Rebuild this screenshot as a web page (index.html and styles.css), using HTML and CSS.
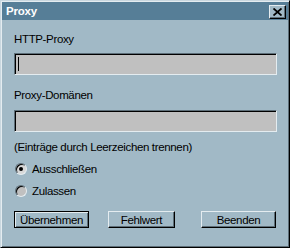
FILE: index.html
```html
<!DOCTYPE html>
<html lang="de">
<head>
  <meta charset="UTF-8">
  <title>Proxy</title>
  <link rel="stylesheet" href="styles.css">
</head>
<body>

  <div class="window">
    <div class="titlebar">
      <span class="title">Proxy</span>
      <button class="close" type="button">
        <svg width="9" height="8" viewBox="0 0 9 8">
          <path d="M0.5 0.5 L8.5 7.5 M8.5 0.5 L0.5 7.5" stroke="#000" stroke-width="1.8" />
        </svg>
      </button>
    </div>

    <div class="content">
      <div class="label first">HTTP-Proxy</div>
      <div class="field"><span class="caret"></span></div>

      <div class="label second">Proxy-Domänen</div>
      <div class="field"></div>

      <div class="label hint">(Einträge durch Leerzeichen trennen)</div>

      <div class="radio-row first-radio">
        <span class="radio checked"></span>
        <span>Ausschließen</span>
      </div>
      <div class="radio-row">
        <span class="radio"></span>
        <span>Zulassen</span>
      </div>

      <div class="buttons">
        <button type="button" class="btn default">Übernehmen</button>
        <button type="button" class="btn narrow">Fehlwert</button>
        <button type="button" class="btn last">Beenden</button>
      </div>
    </div>
  </div>

</body>
</html>
```

FILE: styles.css
```css
body {
  margin: 0;
  font-family: "Liberation Sans", Arial, sans-serif;
  font-size: 11.5px;
  letter-spacing: -0.35px;
  color: #000;
}

.window {
  width: 290px;
  height: 248px;
  box-sizing: border-box;
  padding: 1px;
  background-color: #a1b9c6;
  border: 1px solid;
  border-color: #c9d7df #000 #000 #c9d7df;
  box-shadow: inset 1px 1px #e4ecf0, inset -1px -1px #5d6e78;
}

.titlebar {
  height: 18px;
  display: flex;
  align-items: center;
  justify-content: space-between;
  padding: 0 2px 0 4px;
  background-color: #567e97;
}

.title {
  color: #fff;
  font-weight: bold;
  font-size: 11.5px;
  letter-spacing: -0.2px;
}

.close {
  width: 17px;
  height: 14px;
  padding: 0;
  margin-top: 1px;
  display: flex;
  align-items: center;
  justify-content: center;
  background-color: #a1b9c6;
  border: 1px solid;
  border-color: #e4ecf0 #000 #000 #e4ecf0;
  box-shadow: inset -1px -1px #5d6e78;
}

.content {
  padding: 0 11px 0 12px;
}

.label {
  line-height: 14px;
  height: 14px;
}

.label.first {
  margin-top: 12px;
  margin-bottom: 7px;
}

.label.second {
  margin-top: 13px;
  margin-bottom: 8px;
}

.label.hint {
  margin-top: 8px;
}

.field {
  height: 22px;
  box-sizing: border-box;
  background-color: #c0c0c0;
  border: 1px solid;
  border-color: #5d6e78 #e4ecf0 #e4ecf0 #5d6e78;
  box-shadow: inset 1px 1px #000;
  padding: 3px 0 0 3px;
}

.caret {
  display: block;
  width: 1px;
  height: 14px;
  background-color: #000;
}

.radio-row {
  display: flex;
  align-items: center;
  gap: 5px;
  height: 14px;
  line-height: 14px;
  margin-top: 8px;
  padding-left: 1px;
}

.radio {
  width: 12px;
  height: 12px;
  box-sizing: border-box;
  border-radius: 50%;
  border: 1px solid;
  border-color: #5d6e78 #e4ecf0 #e4ecf0 #5d6e78;
  box-shadow: inset 1px 1px #000;
  background-color: #c0c0c0;
  position: relative;
}

.radio.checked {
  background-color: #d8d8d8;
}

.radio.checked::after {
  content: "";
  position: absolute;
  left: 3px;
  top: 3px;
  width: 4px;
  height: 4px;
  border-radius: 50%;
  background-color: #000;
}

.buttons {
  display: flex;
  margin-top: 13px;
}

.btn {
  height: 17px;
  width: 75px;
  padding: 0;
  box-sizing: border-box;
  font-family: "Liberation Sans", Arial, sans-serif;
  font-size: 11.5px;
  letter-spacing: -0.35px;
  color: #000;
  background-color: #a1b9c6;
  border: 1px solid;
  border-color: #e4ecf0 #000 #000 #e4ecf0;
  box-shadow: inset -1px -1px #5d6e78;
}

.btn.default {
  border-color: #000;
  box-shadow: inset 1px 1px #e4ecf0, inset -1px -1px #5d6e78;
}

.btn.narrow {
  width: 67px;
  margin-left: 19px;
}

.btn.last {
  margin-left: 26px;
}
```
